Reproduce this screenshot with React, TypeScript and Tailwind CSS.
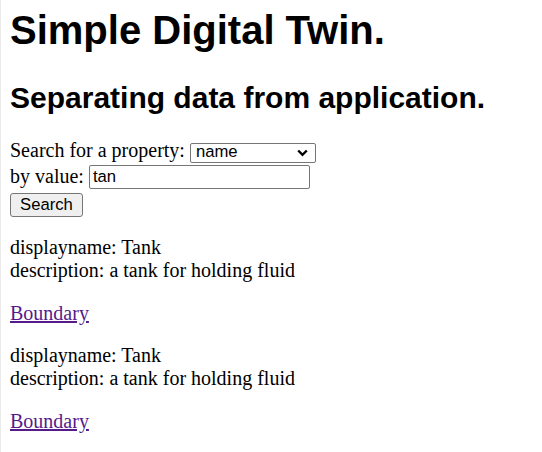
import React from "react";

export default function App() {
  const serif = "font-['Liberation_Serif',_'Times_New_Roman',serif]";
  const sans = "font-['Liberation_Sans',Arial,sans-serif]";
  return (
    <div className={`min-h-[452px] w-[542px] bg-white border-l border-[#ebebeb] pl-[9px] pt-[7px] text-black ${serif}`}>
      <h1 className={`m-0 text-[40px] leading-[46px] font-bold ${sans}`}>Simple Digital Twin.</h1>
      <h2 className={`mt-[27px] mb-0 text-[30px] leading-[35px] font-bold ${sans}`}>
        Separating data from application.
      </h2>
      <form className="mt-[24px] text-[20px] leading-[23px]" onSubmit={(e) => e.preventDefault()}>
        <div className="flex h-[25px] items-start">
          <span>Search for a property:</span>
          <div className="relative ml-[5px] mt-[4px] h-[20px] w-[126px] rounded-[2px] border border-[#767676] bg-white">
            <select
              defaultValue="name"
              className={`absolute left-0 top-[-2px] h-[20px] w-full appearance-none bg-transparent py-0 pl-[5px] text-[16.67px] leading-[20px] outline-none ${sans}`}
            >
              <option value="name">name</option>
              <option value="displayname">displayname</option>
              <option value="description">description</option>
            </select>
            <svg
              className="pointer-events-none absolute right-[7px] top-[5px]"
              width="11"
              height="8"
              viewBox="0 0 11 8"
            >
              <path d="M1.2 1.5 L5.5 5.8 L9.8 1.5" fill="none" stroke="#000" strokeWidth="2.4" />
            </svg>
          </div>
        </div>
        <div className="flex h-[26px] items-start">
          <span className="mt-[1px]">by value:</span>
          <input
            type="text"
            defaultValue="tan"
            className={`ml-[5px] mt-[1px] h-[24px] w-[221px] rounded-[2px] border border-[#767676] bg-white px-[3px] text-[16.67px] outline-none ${sans}`}
          />
        </div>
        <button
          type="submit"
          className={`mt-[3px] block h-[24px] w-[73px] rounded-[3px] border border-[#767676] bg-[#efefef] text-center text-[16.67px] leading-[20px] ${sans}`}
        >
          Search
        </button>
      </form>
      <div className="mt-[19px] text-[20px] leading-[23px]">
        <p className="m-0">
          displayname: Tank
          <br />
          description: a tank for holding fluid
        </p>
        <p className="mt-[20px] mb-0">
          <a href="#" className="text-[#551a8b] underline">Boundary</a>
        </p>
        <p className="mt-[19px] mb-0">
          displayname: Tank
          <br />
          description: a tank for holding fluid
        </p>
        <p className="mt-[20px] mb-0">
          <a href="#" className="text-[#551a8b] underline">Boundary</a>
        </p>
      </div>
    </div>
  );
}
